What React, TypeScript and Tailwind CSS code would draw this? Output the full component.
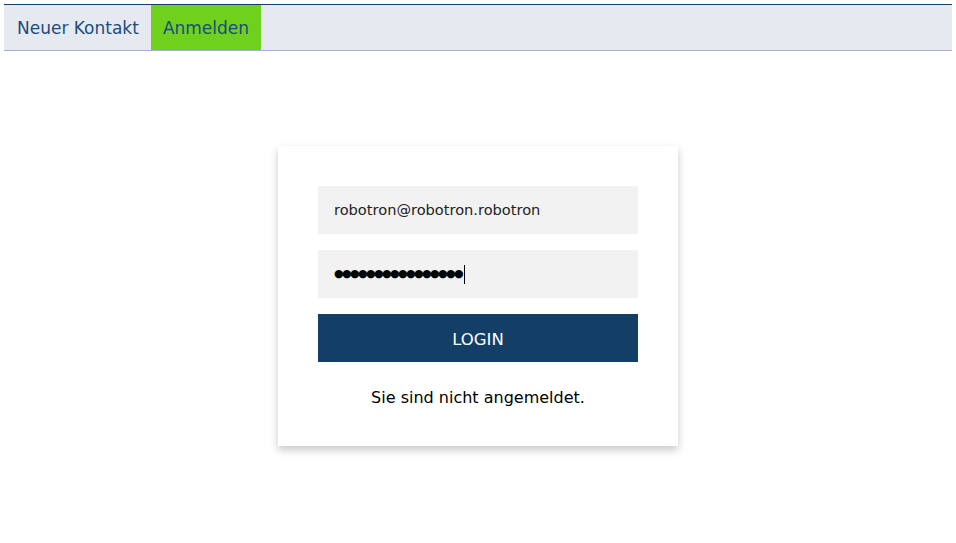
import React from "react";

const font = "font-['DejaVu_Sans',Verdana,sans-serif]";

export default function App() {
  return (
    <div className={`min-h-[543px] bg-white p-1 ${font}`}>
      <nav className="flex h-[47px] border-t border-b border-t-[#123f66] border-b-[#a9aed0] bg-[#e6eaf0]">
        <a className="flex items-center pt-[3px] pr-3 pl-[13px] text-[17px] text-[#1a4d7c]">
          Neuer Kontakt
        </a>
        <a className="flex items-center bg-[#6fd11b] pt-[3px] pr-[12px] pl-[12px] text-[17px] text-[#1a4d7c]">
          Anmelden
        </a>
      </nav>

      <div className="flex justify-center pt-[95px]">
        <div className="flex w-[400px] flex-col gap-4 bg-white px-10 pt-10 pb-[36px] shadow-[0_4px_8px_rgba(0,0,0,0.22)]">
          <div className="flex h-12 items-center bg-[#f2f2f2] px-4 text-[14.6px] text-[#222]">
            robotron@robotron.robotron
          </div>
          <div className="flex h-12 items-center bg-[#f2f2f2] px-4 text-black">
            <span className="text-[11px] tracking-[-1.6px]">●●●●●●●●●●●●●●●●</span>
            <span className="ml-[2px] h-[19px] w-px bg-black" />
          </div>
          <button className="h-12 bg-[#133f66] pt-[4px] text-[16.5px] text-white">
            LOGIN
          </button>
          <p className="mt-[8px] text-center text-[16px] text-black">
            Sie sind nicht angemeldet.
          </p>
        </div>
      </div>
    </div>
  );
}
